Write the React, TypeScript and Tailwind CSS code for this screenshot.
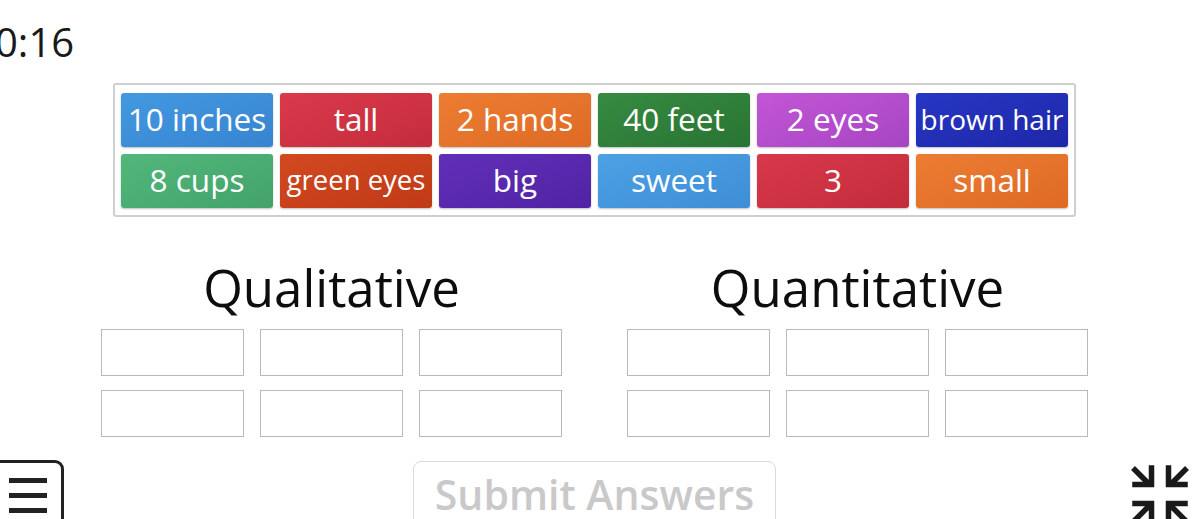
import React from 'react';

type Tile = { label: string; bg: string; size?: string };

const tiles: Tile[] = [
    { label: '10 inches', bg: 'from-[#4399e0] to-[#3784d0]' },
    { label: 'tall', bg: 'from-[#da3a4b] to-[#c42c3b]' },
    { label: '2 hands', bg: 'from-[#ed7d33] to-[#de6a24]' },
    { label: '40 feet', bg: 'from-[#368b41] to-[#297433]' },
    { label: '2 eyes', bg: 'from-[#c356d6] to-[#a645c2]' },
    { label: 'brown hair', bg: 'from-[#2737c4] to-[#1d27a8]', size: 'text-[28px]' },
    { label: '8 cups', bg: 'from-[#52b77b] to-[#43a36a]' },
    { label: 'green eyes', bg: 'from-[#d34920] to-[#bf3a17]', size: 'text-[27.5px]' },
    { label: 'big', bg: 'from-[#612fb8] to-[#5023a4]' },
    { label: 'sweet', bg: 'from-[#4ca1e4] to-[#3f8ed6]' },
    { label: '3', bg: 'from-[#d8394a] to-[#c32c3b]' },
    { label: 'small', bg: 'from-[#ed7d33] to-[#de6a24]' },
];

function DropGroup({ title }: { title: string }) {
    return (
        <div className="w-[461px] flex flex-col items-center">
            <h2 className="text-[51px] leading-none text-[#0d0d0d]">{title}</h2>
            <div className="mt-[16px] grid grid-cols-3 gap-x-[16px] gap-y-[14px] w-full">
                {Array.from({ length: 6 }).map((_, i) => (
                    <div key={i} className="h-[47px] border border-[#b9b9b9] bg-white" />
                ))}
            </div>
        </div>
    );
}

export default function App() {
    return (
        <div
            className="w-[1200px] h-[519px] overflow-hidden bg-white flex flex-col"
            style={{ fontFamily: '"Open Sans", "Noto Sans", sans-serif' }}
        >
            {/* Timer */}
            <div className="mt-[22px] -ml-[5px] text-[40px] leading-none font-medium text-[#1a1a1a]">
                0:16
            </div>

            {/* Word bank */}
            <div className="mt-[21px] ml-[113px] w-[963px] border-2 border-[#cfcfcf] rounded-[3px] px-[6px] pt-[8px] pb-[7px]">
                <div className="grid grid-cols-6 gap-[7px]">
                    {tiles.map((t) => (
                        <div
                            key={t.label}
                            className={`h-[54px] pb-[3px] rounded-[3px] bg-linear-to-br ${t.bg} shadow-[0_1px_2px_rgba(0,0,0,0.25)] flex items-center justify-center text-white leading-none whitespace-nowrap ${t.size ?? 'text-[31.5px]'}`}
                        >
                            {t.label}
                        </div>
                    ))}
                </div>
            </div>

            {/* Categories */}
            <div className="mt-[45px] ml-[101px] flex gap-[65px]">
                <DropGroup title="Qualitative" />
                <DropGroup title="Quantitative" />
            </div>

            {/* Bottom bar */}
            <div className="mt-[23px] flex items-start">
                <div className="-ml-[8px] w-[72px] h-[80px] border-[3px] border-[#222] rounded-[9px] flex flex-col items-center pt-[15px] gap-[10px]">
                    <div className="w-[38px] h-[5px] bg-[#222]" />
                    <div className="w-[38px] h-[5px] bg-[#222]" />
                    <div className="w-[38px] h-[5px] bg-[#222]" />
                </div>
                <button className="ml-[349px] mt-[1px] w-[363px] border-[1.5px] border-[#dcdcdc] rounded-[8px] pt-[12px] pb-[20px] text-[41px] leading-none font-semibold text-[#c9c9c9] bg-white">
                    Submit Answers
                </button>
                <svg className="ml-auto mr-[10px] mt-[5px]" width="60" height="60" viewBox="0 0 60 60" fill="none" stroke="#1a1a1a" strokeWidth="5.5">
                    <path d="M3 3 L19 19" />
                    <path d="M5 19.5 H21.5 V3" strokeLinecap="square" />
                    <path d="M57 3 L41 19" />
                    <path d="M55 19.5 H38.5 V3" strokeLinecap="square" />
                    <path d="M3 57 L19 41" />
                    <path d="M5 38.5 H21.5 V55" strokeLinecap="square" />
                    <path d="M57 57 L41 41" />
                    <path d="M55 38.5 H38.5 V55" strokeLinecap="square" />
                </svg>
            </div>
        </div>
    );
}
